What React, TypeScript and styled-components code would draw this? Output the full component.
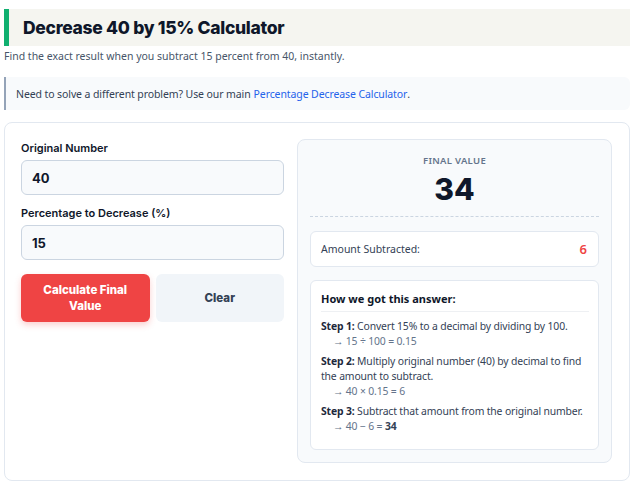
import React from "react";
import styled, { createGlobalStyle } from "styled-components";

const Global = createGlobalStyle`
  html, body { margin: 0; padding: 0; background: #ffffff; }
  body { font-family: "Noto Sans", "Open Sans", sans-serif; color: #334155; }
  * { box-sizing: border-box; }
`;

const Page = styled.div`
  width: 626px;
  margin: 9px 0 0 4px;
  display: flex;
  flex-direction: column;
`;

const TitleBar = styled.header`
  background: #f5f5f0;
  border-left: 5px solid #10b070;
  height: 37px;
  display: flex;
  align-items: center;
  padding-left: 14px;
`;

const Title = styled.h1`
  margin: 0;
  font-family: "Inter", sans-serif;
  font-weight: 800;
  font-size: 17.5px;
  color: #0f172a;
  letter-spacing: -0.3px;
`;

const Intro = styled.p`
  margin: 3px 0 0;
  font-size: 10.5px;
  line-height: 15px;
  color: #475569;
`;

const Note = styled.div`
  margin-top: 13px;
  height: 33px;
  background: #f8fafc;
  border-left: 2px solid #94a3b8;
  border-radius: 0 6px 6px 0;
  display: flex;
  align-items: center;
  padding-left: 10px;
  font-size: 10.5px;
  letter-spacing: -0.1px;
  color: #334155;
`;

const Link = styled.a`
  color: #2563eb;
  text-decoration: none;
  margin-left: 3px;
`;

const Card = styled.section`
  margin-top: 12px;
  border: 1px solid #e2e8f0;
  border-radius: 8px;
  padding: 16px 17px 17px 16px;
  display: grid;
  grid-template-columns: 263px 315px;
  gap: 13px;
  align-items: start;
`;

const Form = styled.div`
  display: flex;
  flex-direction: column;
  padding-top: 1px;
`;

const Label = styled.label`
  font-family: "Inter", sans-serif;
  font-weight: 600;
  font-size: 11px;
  color: #0f172a;
  line-height: 16px;
  margin-bottom: 4px;
`;

const Input = styled.div`
  height: 35px;
  border: 1px solid #cbd5e1;
  background: #f8fafc;
  border-radius: 6px;
  display: flex;
  align-items: center;
  padding-left: 10px;
  font-family: "Inter", sans-serif;
  font-weight: 700;
  font-size: 13px;
  color: #0f172a;
  margin-bottom: 10px;
`;

const Buttons = styled.div`
  display: grid;
  grid-template-columns: 1fr 1fr;
  gap: 6px;
  margin-top: 4px;
`;

const Button = styled.button<{ $primary?: boolean }>`
  height: 48px;
  border: none;
  border-radius: 6px;
  font-family: "Inter", sans-serif;
  font-weight: 800;
  font-size: 11.5px;
  line-height: 16px;
  padding: 0 16px;
  background: ${(p) => (p.$primary ? "#ef4444" : "#f1f5f9")};
  color: ${(p) => (p.$primary ? "#ffffff" : "#334155")};
  box-shadow: ${(p) => (p.$primary ? "0 3px 6px rgba(239,68,68,0.25)" : "none")};
`;

const Result = styled.div`
  background: #f8fafc;
  border: 1px solid #e2e8f0;
  border-radius: 8px;
  padding: 12px 12px;
  display: flex;
  flex-direction: column;
`;

const Summary = styled.div`
  display: flex;
  flex-direction: column;
  align-items: center;
  border-bottom: 1px dashed #cbd5e1;
  padding-bottom: 8px;
  margin-bottom: 14px;
`;

const Caption = styled.div`
  font-size: 9.5px;
  font-weight: 600;
  letter-spacing: 0.3px;
  color: #64748b;
  text-transform: uppercase;
  line-height: 14px;
  margin-top: 2px;
`;

const Big = styled.div`
  font-family: "Inter", sans-serif;
  font-weight: 800;
  font-size: 30px;
  line-height: 38px;
  color: #0f172a;
  margin-top: 2px;
`;

const Box = styled.div`
  background: #ffffff;
  border: 1px solid #e2e8f0;
  border-radius: 6px;
`;

const AmountRow = styled(Box)`
  height: 36px;
  display: flex;
  align-items: center;
  justify-content: space-between;
  padding: 0 11px 0 10px;
  font-size: 10.5px;
  color: #334155;
  margin-bottom: 13px;
`;

const Red = styled.span`
  color: #ef4444;
  font-weight: 600;
  font-size: 13px;
`;

const Steps = styled(Box)`
  padding: 10px 9px 10px 10px;
  font-size: 10.4px;
  letter-spacing: -0.15px;
  line-height: 15px;
  color: #334155;
`;

const StepsTitle = styled.div`
  font-weight: 700;
  font-size: 11px;
  letter-spacing: 0;
  color: #0f172a;
  padding-bottom: 5px;
  border-bottom: 1px solid #eef0f3;
  margin-bottom: 7px;
`;

const Step = styled.p`
  margin: 0 0 5px;
  b { color: #1e293b; font-weight: 700; }
`;

const Calc = styled.span`
  display: block;
  padding-left: 12px;
  color: #64748b;
  b { color: #334155; font-weight: 700; }
`;

export default function App() {
  return (
    <>
      <Global />
      <Page>
        <TitleBar>
          <Title>Decrease 40 by 15% Calculator</Title>
        </TitleBar>
        <Intro>Find the exact result when you subtract 15 percent from 40, instantly.</Intro>
        <Note>
          Need to solve a different problem? Use our main
          <Link href="#">Percentage Decrease Calculator</Link>.
        </Note>
        <Card>
          <Form>
            <Label>Original Number</Label>
            <Input>40</Input>
            <Label>Percentage to Decrease (%)</Label>
            <Input>15</Input>
            <Buttons>
              <Button $primary>Calculate Final Value</Button>
              <Button>Clear</Button>
            </Buttons>
          </Form>
          <Result>
            <Summary>
              <Caption>Final Value</Caption>
              <Big>34</Big>
            </Summary>
            <AmountRow>
              <span>Amount Subtracted:</span>
              <Red>6</Red>
            </AmountRow>
            <Steps>
              <StepsTitle>How we got this answer:</StepsTitle>
              <Step>
                <b>Step 1:</b> Convert 15% to a decimal by dividing by 100.
                <Calc>→ 15 ÷ 100 = 0.15</Calc>
              </Step>
              <Step>
                <b>Step 2:</b> Multiply original number (40) by decimal to find the amount to subtract.
                <Calc>→ 40 × 0.15 = 6</Calc>
              </Step>
              <Step>
                <b>Step 3:</b> Subtract that amount from the original number.
                <Calc>→ 40 − 6 = <b>34</b></Calc>
              </Step>
            </Steps>
          </Result>
        </Card>
      </Page>
    </>
  );
}
